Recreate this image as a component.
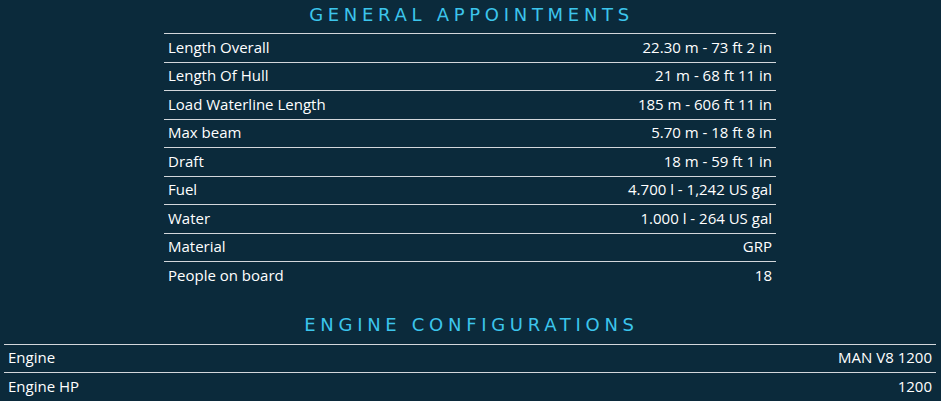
export default function App() {
  const general = [
    ["Length Overall", "22.30 m - 73 ft 2 in"],
    ["Length Of Hull", "21 m - 68 ft 11 in"],
    ["Load Waterline Length", "185 m - 606 ft 11 in"],
    ["Max beam", "5.70 m - 18 ft 8 in"],
    ["Draft", "18 m - 59 ft 1 in"],
    ["Fuel", "4.700 l - 1,242 US gal"],
    ["Water", "1.000 l - 264 US gal"],
    ["Material", "GRP"],
    ["People on board", "18"],
  ];
  const engine = [
    ["Engine", "MAN V8 1200"],
    ["Engine HP", "1200"],
  ];
  const titleCls =
    "h-[33px] flex items-center justify-center pb-[5px] pl-[2px] text-[18px] font-normal tracking-[4.7px] text-[#3cc5ec] [font-family:'DejaVu_Sans',sans-serif]";
  const rowCls =
    "h-[28.5px] flex items-center justify-between px-[4px] pb-[2px] border-t border-[#d3d7db] text-[15px] font-medium text-[#ffffff] [font-family:'Open_Sans',sans-serif]";
  return (
    <div className="w-[941px] h-[401px] overflow-hidden bg-[#0b2a3b]">
      <div className={titleCls}>GENERAL APPOINTMENTS</div>
      <div className="w-[612px] ml-[164px]">
        {general.map(([k, v]) => (
          <div key={k} className={rowCls}>
            <span>{k}</span>
            <span>{v}</span>
          </div>
        ))}
      </div>
      <div className={titleCls + " mt-[21px]"}>ENGINE CONFIGURATIONS</div>
      <div className="w-[932px] ml-[4px]">
        {engine.map(([k, v]) => (
          <div key={k} className={rowCls}>
            <span>{k}</span>
            <span>{v}</span>
          </div>
        ))}
      </div>
    </div>
  );
}
